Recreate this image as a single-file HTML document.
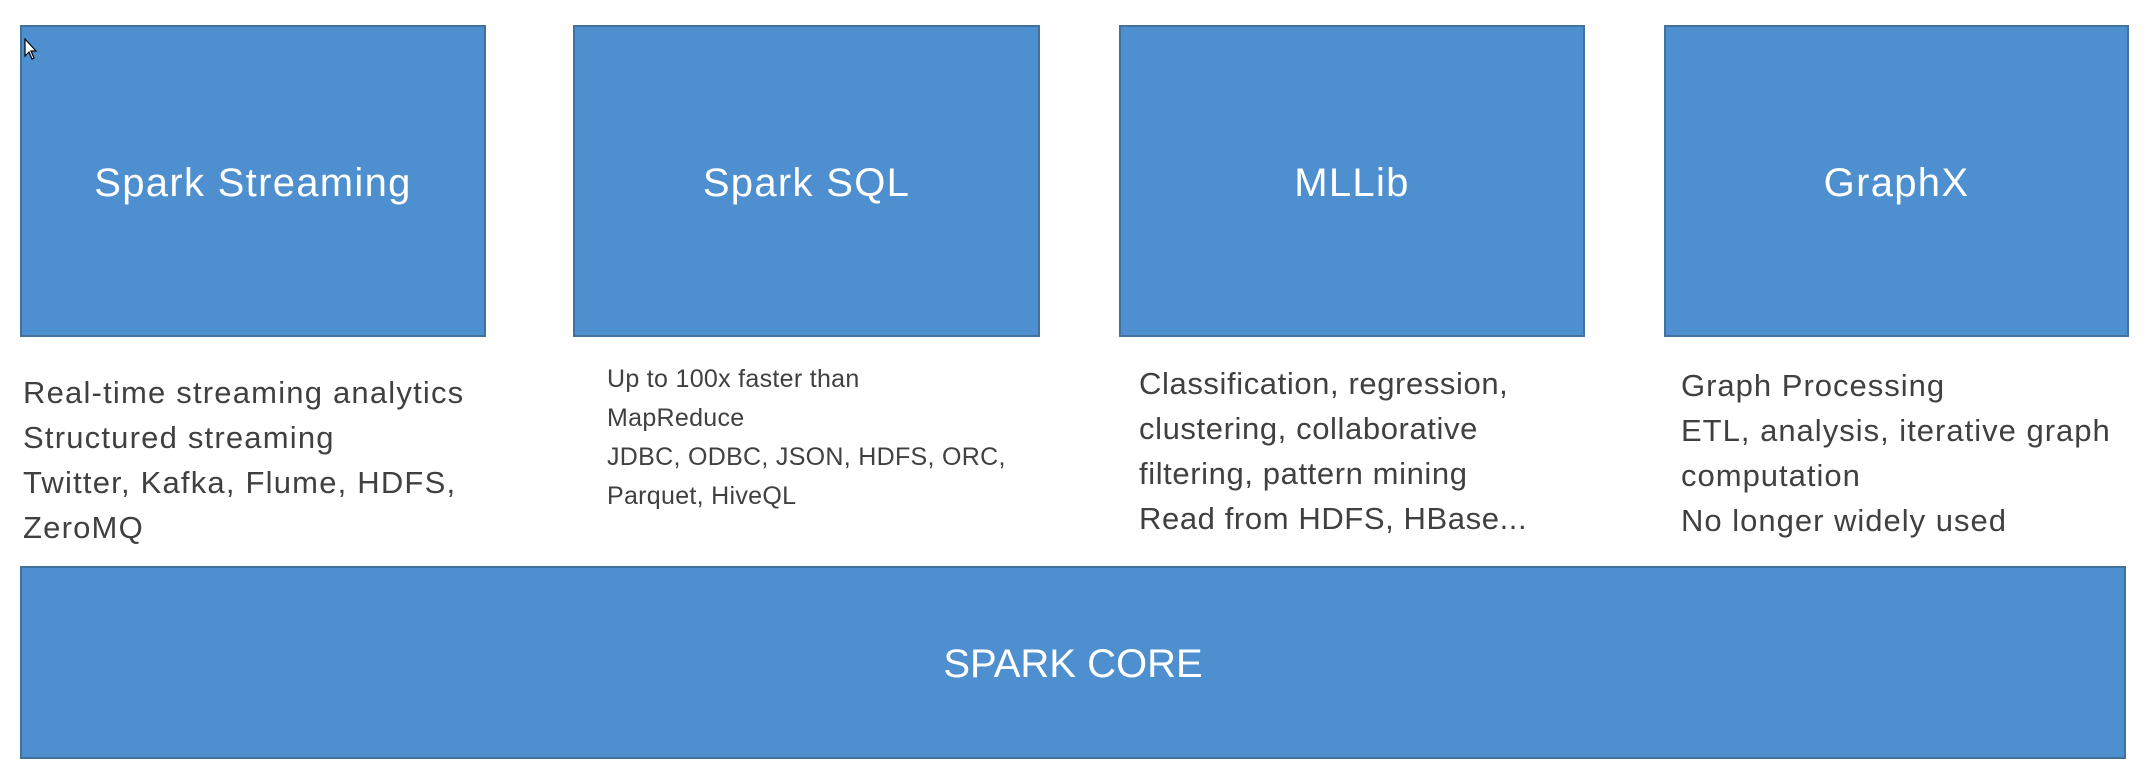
<!DOCTYPE html>
<html><head><meta charset="utf-8"><style>
html,body{margin:0;padding:0;background:#fff;}
body{width:2150px;height:782px;position:relative;overflow:hidden;font-family:"Liberation Sans",sans-serif;}
.b{position:absolute;background:#4e8fcf;border:2px solid #41719c;box-sizing:border-box;color:#fff;display:flex;align-items:center;justify-content:center;font-size:40px;letter-spacing:1.3px;}
.t{position:absolute;color:#404040;font-size:31px;letter-spacing:1.2px;line-height:45px;white-space:nowrap;}
.s{font-size:25px;line-height:39px;letter-spacing:0.3px;}
</style></head><body>
<div class="b" style="left:20px;top:25px;width:466px;height:312px;padding-top:4px;">Spark Streaming</div>
<div class="b" style="left:573px;top:25px;width:467px;height:312px;padding-top:4px;">Spark SQL</div>
<div class="b" style="left:1119px;top:25px;width:466px;height:312px;padding-top:4px;">MLLib</div>
<div class="b" style="left:1664px;top:25px;width:465px;height:312px;padding-top:4px;">GraphX</div>
<div class="b" style="left:20px;top:566px;width:2106px;height:193px;padding-top:4px;letter-spacing:0;">SPARK CORE</div>
<svg style="position:absolute;left:24px;top:38px" width="16" height="24" viewBox="0 0 16 24"><path d="M1 1 L1 18 L5 14 L8 21 L10 20 L7 13 L12 13 Z" fill="#fff" stroke="#000" stroke-width="1.2"/></svg>
<div class="t" style="left:23px;top:370px;">Real-time streaming analytics<br>Structured streaming<br>Twitter, Kafka, Flume, HDFS,<br>ZeroMQ</div>
<div class="t s" style="left:607px;top:360px;">Up to 100x faster than<br>MapReduce<br>JDBC, ODBC, JSON, HDFS, ORC,<br>Parquet, HiveQL</div>
<div class="t" style="left:1139px;top:361px;letter-spacing:0.6px;">Classification, regression,<br>clustering, collaborative<br>filtering, pattern mining<br>Read from HDFS, HBase...</div>
<div class="t" style="left:1681px;top:363px;letter-spacing:1px;">Graph Processing<br>ETL, analysis, iterative graph<br>computation<br>No longer widely used</div>
</body></html>
